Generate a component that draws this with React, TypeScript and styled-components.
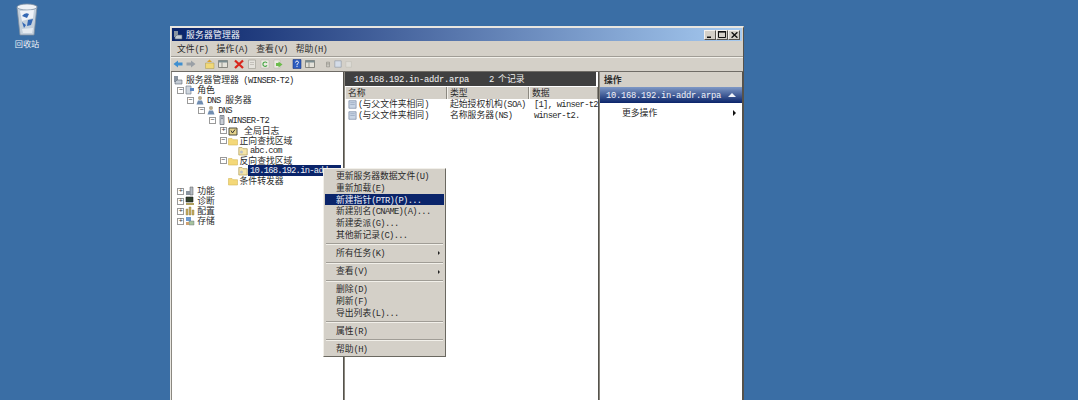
import React from "react"
import styled, { createGlobalStyle } from "styled-components"

const GlobalStyle = createGlobalStyle`
    html, body { margin: 0; padding: 0; height: 100%; overflow: hidden; }
    body {
        background: #3a6ea5;
        font-family: "Noto Sans CJK SC", "Liberation Mono", monospace;
        font-size: 8.8px;
        line-height: 10px;
        color: #2a2a2a;
    }
`

// latin letters sit in a narrower mono font than the chinese ones
const Latin = styled.span<{ $wide?: boolean }>`
    font-family: "Liberation Mono", monospace;
    font-size: 1em;
    letter-spacing: ${p => (p.$wide ? "-0.28px" : "-0.72px")};
`

const T = ({ s, wide }: { s: string; wide?: boolean }) => (
    <>
        {s.split(/([\u0000-\u00ff]+)/).map((part, i) =>
            i % 2 ? <Latin key={i} $wide={wide}>{part}</Latin> : part
        )}
    </>
)

const Desktop = styled.div`
    position: relative;
    height: 100vh;
    padding: 26px 0 0 170px;
    box-sizing: border-box;
    overflow: hidden;
`
const BinIcon = styled.div`
    position: absolute;
    left: 8px;
    top: 2px;
    width: 38px;
    display: flex;
    flex-direction: column;
    align-items: center;
    gap: 2px;
    color: #eef3f8;
    font-size: 8.2px;
`
const Window = styled.div`
    width: 574px;
    height: 400px;
    box-sizing: border-box;
    background: #d4d0c8;
    border-top: 2px solid #e8e6e0;
    border-left: 1px solid #e8e6e0;
    border-right: 1px solid #55524c;
    display: flex;
    flex-direction: column;
`
const TitleBar = styled.div`
    height: 13px;
    margin: 0 1px;
    display: flex;
    align-items: center;
    gap: 3px;
    padding-left: 1px;
    background: linear-gradient(90deg, #0a246a, #a6caf0);
    color: #f4f6fa;
    letter-spacing: 0.2px;
    flex: none;
`
const TitleButtons = styled.div`
    margin-left: auto;
    margin-right: 2px;
    display: flex;
`
const TitleButton = styled.div`
    width: 12px;
    height: 10px;
    box-sizing: border-box;
    background: #d4d0c8;
    border: 1px solid;
    border-color: #f4f2ee #55524c #55524c #f4f2ee;
    display: flex;
    align-items: center;
    justify-content: center;
`
const MenuBar = styled.div`
    height: 14px;
    margin-top: 1px;
    padding-left: 6px;
    display: flex;
    align-items: center;
    gap: 10px;
    flex: none;
    border-bottom: 1px solid #a09d96;
    box-shadow: 0 1px 0 #f2f0ea;
    & > span { width: 29.6px; white-space: nowrap; }
`
const Toolbar = styled.div`
    height: 14px;
    padding-left: 2px;
    display: flex;
    align-items: center;
    gap: 3px;
    flex: none;
`
const ToolGap = styled.div<{ $w: number }>`
    width: ${p => p.$w}px;
    height: 11px;
    flex: none;
`
const Panes = styled.div`
    flex: 1;
    display: grid;
    grid-template-columns: 173px 255px 144px;
    min-height: 0;
    border-top: 1px solid #6f6c66;
`
const Pane = styled.div`
    background: #fff;
    border-right: 1px solid #55524c;
    border-left: 1px solid #8b8880;
    min-width: 0;
    overflow: hidden;
`
const Tree = styled.div`
    padding-top: 3px;
`
const TreeRow = styled.div<{ $depth: number }>`
    height: 10.1px;
    padding-left: ${p => 1 + p.$depth * 10.7}px;
    display: flex;
    align-items: center;
    white-space: nowrap;
`
const Expander = styled.div`
    width: 7px;
    height: 7px;
    margin-right: 1px;
    box-sizing: border-box;
    flex: none;
    border: 1px solid #9a9a9a;
    color: #333;
    font: 7px/5px "Liberation Mono", monospace;
    text-align: center;
`
const ExpanderSpace = styled.div`
    width: 8px;
    flex: none;
`
const Label = styled.span<{ $selected?: boolean; $gap?: number }>`
    margin-left: ${p => p.$gap ?? 1}px;
    padding-left: ${p => (p.$selected ? 2 : 1)}px;
    background: ${p => (p.$selected ? "#0a246a" : "transparent")};
    color: ${p => (p.$selected ? "#f0f2f8" : "inherit")};
    width: ${p => (p.$selected ? "91px" : "auto")};
    overflow: ${p => (p.$selected ? "hidden" : "visible")};
`
const DarkHeader = styled.div`
    height: 14px;
    background: #404040;
    color: #f2f2f2;
    display: flex;
    align-items: center;
    gap: 20px;
    padding-left: 9px;
    margin-right: 2px;
    white-space: nowrap;
`
const ColumnRow = styled.div`
    display: grid;
    grid-template-columns: 102px 82px 1fr;
    height: 12px;
    margin-top: 1px;
    background: #d4d0c8;
`
const ColumnHead = styled.div`
    padding-left: 2px;
    line-height: 12px;
    border-right: 1px solid #8b8880;
    border-left: 1px solid #f2f0ea;
`
const Rows = styled.div`
    padding-top: 0;
`
const ListRow = styled.div`
    display: grid;
    grid-template-columns: 102px 84px 1fr;
    height: 11px;
    align-items: center;
    white-space: nowrap;
    padding-left: 3px;
`
const ListCell = styled.div`
    display: flex;
    align-items: center;
    gap: 1px;
`
const ActionTitle = styled.div`
    height: 15px;
    background: #d4d0c8;
    font-weight: 700;
    line-height: 15px;
    padding-left: 4px;
`
const ActionBand = styled.div`
    height: 16px;
    background: linear-gradient(180deg, #7e98c6, #0a246a);
    color: #f2f4fa;
    display: flex;
    align-items: center;
    justify-content: space-between;
    padding: 0 6px 0 6px;
`
const ActionItem = styled.div`
    height: 20px;
    display: flex;
    align-items: center;
    justify-content: space-between;
    padding: 0 6px 0 22px;
`
const Arrow = styled.div<{ $size: number; $color: string }>`
    width: 0;
    height: 0;
    border-left: ${p => p.$size}px solid ${p => p.$color};
    border-top: ${p => p.$size}px solid transparent;
    border-bottom: ${p => p.$size}px solid transparent;
`
const UpCaret = styled.div`
    width: 0;
    height: 0;
    border-left: 4px solid transparent;
    border-right: 4px solid transparent;
    border-bottom: 4px solid #f2f4fa;
`
const ContextMenu = styled.div`
    position: absolute;
    left: 323px;
    top: 168px;
    width: 123px;
    box-sizing: border-box;
    background: #d4d0c8;
    border: 1px solid;
    border-color: #f2f0ea #6a6860 #6a6860 #f2f0ea;
    padding: 1px;
`
const MenuItem = styled.div<{ $active?: boolean }>`
    height: 11.8px;
    box-sizing: border-box;
    display: flex;
    align-items: center;
    justify-content: space-between;
    padding: 1px 4px 0 11px;
    white-space: nowrap;
    background: ${p => (p.$active ? "#0a246a" : "transparent")};
    color: ${p => (p.$active ? "#eef1f8" : "inherit")};
`
const MenuSep = styled.div`
    height: 1px;
    margin: 2.7px 1px 2.6px;
    background: #a09d96;
    box-shadow: 0 1px 0 #f2f0ea;
`

const Svg = ({ w = 10, h = 10, children }: { w?: number; h?: number; children: React.ReactNode }) => (
    <svg width={w} height={h} viewBox="0 0 10 10" style={{ flex: "none", display: "block" }}>
        {children}
    </svg>
)

type IconKind =
    | "server" | "roles" | "person" | "tower" | "log" | "folder" | "zone"
    | "feature" | "diag" | "config" | "store"

const TreeIcon = ({ kind }: { kind: IconKind }) => {
    switch (kind) {
        case "server":
            return <Svg><path d="M1 1h4v6H1z" fill="#8a94a0" /><path d="M4 5h5v4H2V7z" fill="#c3cbd4" stroke="#5b6470" strokeWidth=".6" /></Svg>
        case "roles":
            return <Svg><path d="M1 1h5v8H1z" fill="#cfd6de" stroke="#6a7480" strokeWidth=".6" /><path d="M5 3h4v3H5z" fill="#5d86c2" /></Svg>
        case "person":
            return <Svg><circle cx="5" cy="3" r="2" fill="#b8a888" /><path d="M1.5 9.5 3 5.5h4l1.5 4z" fill="#6f8cb0" /></Svg>
        case "tower":
            return <Svg><path d="M3 .5h4v9H3z" fill="#c9ced6" stroke="#5b6470" strokeWidth=".7" /><path d="M4 2h2M4 3.5h2" stroke="#5b6470" strokeWidth=".6" /></Svg>
        case "log":
            return <Svg><path d="M1 2h8v7H1z" fill="#e6d48c" stroke="#3c3c30" strokeWidth=".9" /><path d="M3 4.5 4.5 7 7 3.5" stroke="#333" strokeWidth="1" fill="none" /></Svg>
        case "folder":
            return <Svg><path d="M.5 2.5h3.5l1 1.2h4.5v5.3H.5z" fill="#f4d878" stroke="#d4b85c" strokeWidth=".6" /></Svg>
        case "zone":
            return <Svg><path d="M.8 1.5h3.2l1 1.2h4.2v6.3H.8z" fill="#f4e4a8" stroke="#b8a468" strokeWidth=".8" /><circle cx="3.5" cy="6" r="1.5" fill="#b8c0c8" /></Svg>
        case "feature":
            return <Svg><path d="M5 1h3v8H5z" fill="#b4bac2" stroke="#555" strokeWidth=".5" /><path d="M1 5h4v4H1z" fill="#8a94a0" /></Svg>
        case "diag":
            return <Svg><path d="M1 1h7v5H1z" fill="#30402c" stroke="#222" strokeWidth=".6" /><path d="M1 7h8v2H1z" fill="#b0a060" /></Svg>
        case "config":
            return <Svg><path d="M1 3h2v6H1zM4 1h2v8H4zM7 4h2v5H7z" fill="#c8ac60" stroke="#8a7840" strokeWidth=".4" /></Svg>
        default:
            return <Svg><path d="M1 1h5v4H1z" fill="#6d9ad0" /><path d="M4 5h5v4H4z" fill="#a8c4a0" stroke="#5b6470" strokeWidth=".4" /><path d="M1 6h3v3H1z" fill="#d0a070" /></Svg>
    }
}

const treeRows: { depth: number; exp?: string; icon: IconKind; text: string; gap?: number; selected?: boolean }[] = [
    { depth: 0, icon: "server", text: "服务器管理器 (WINSER-T2)", gap: 2 },
    { depth: 0.4, exp: "−", icon: "roles", text: "角色" },
    { depth: 1.3, exp: "−", icon: "person", text: "DNS 服务器" },
    { depth: 2.35, exp: "−", icon: "person", text: "DNS" },
    { depth: 3.36, exp: "−", icon: "tower", text: "WINSER-T2", gap: 0 },
    { depth: 4.4, exp: "+", icon: "log", text: "全局日志", gap: 5 },
    { depth: 4.35, exp: "−", icon: "folder", text: "正向查找区域" },
    { depth: 5.33, icon: "zone", text: "abc.com" },
    { depth: 4.35, exp: "−", icon: "folder", text: "反向查找区域" },
    { depth: 5.33, icon: "zone", text: "10.168.192.in-addr.arpa", gap: 0, selected: true },
    { depth: 4.35, icon: "folder", text: "条件转发器" },
    { depth: 0.4, exp: "+", icon: "feature", text: "功能" },
    { depth: 0.4, exp: "+", icon: "diag", text: "诊断" },
    { depth: 0.4, exp: "+", icon: "config", text: "配置" },
    { depth: 0.4, exp: "+", icon: "store", text: "存储" },
]

const DocIcon = () => (
    <Svg w={9} h={9}>
        <path d="M1 .8h8v8.4H1z" fill="#c8d4e4" stroke="#7c8ca4" strokeWidth=".8" />
        <path d="M2.5 3h5M2.5 5h5" stroke="#8ea0b8" strokeWidth=".7" />
    </Svg>
)

const tools: (string | number)[] = [
    "back", "forward", 3, "up", "pane", 0, "delete", "doc", "refresh", "export", 3, "help", "pane", 4, "tall", "doc2", "fade",
]

const ToolIcon = ({ kind }: { kind: string }) => {
    switch (kind) {
        case "back":
            return <Svg><path d="M5 1.5v2h4.5v3H5v2L.5 5z" fill="#3f8fd0" /></Svg>
        case "forward":
            return <Svg><path d="M5 1.5v2H.5v3H5v2L9.5 5z" fill="#9aa0a6" /></Svg>
        case "up":
            return <Svg><path d="M.5 4h8.5v5.5H.5z" fill="#f0d878" stroke="#a89850" strokeWidth=".5" /><path d="M4.5.5 7 3H2z" fill="#d8a030" /></Svg>
        case "pane":
            return <Svg><path d="M.5 1.5h9v7h-9z" fill="#e4e2da" stroke="#74746c" strokeWidth=".8" /><path d="M.5 1.5h9v2h-9z" fill="#7a8c90" /><path d="M4 3.5v5" stroke="#74746c" strokeWidth=".7" /></Svg>
        case "delete":
            return <Svg><path d="M1 1.5 9 9M9 1.5 1 9" stroke="#d8261c" strokeWidth="2.3" /></Svg>
        case "doc":
            return <Svg><path d="M1.5 1h7v8.5h-7z" fill="#e4e2dc" stroke="#a4a29a" strokeWidth=".7" /><path d="M3 3.5h4M3 5.5h4" stroke="#b4b2aa" strokeWidth=".7" /></Svg>
        case "refresh":
            return <Svg><path d="M1 1h8v8H1z" fill="#eceae2" stroke="#b4b2aa" strokeWidth=".5" /><path d="M7 4a2.2 2.2 0 1 0 0 2.4" fill="none" stroke="#4aa84a" strokeWidth="1.2" /></Svg>
        case "export":
            return <Svg><path d="M1 1h6v8H1z" fill="#eceae2" stroke="#b4b2aa" strokeWidth=".5" /><path d="M5.5 2.5 9.5 5.5 5.5 8.5V7H3V4h2.5z" fill="#6cbc4c" /></Svg>
        case "help":
            return <Svg><path d="M1 .5h8v9H1z" fill="#2c5cc0" stroke="#1c3880" strokeWidth=".6" /><path d="M3.5 3.5Q3.8 2 5 2t1.5 1.4Q6.5 4.4 5 5.3v1" fill="none" stroke="#f4f4f4" strokeWidth="1" /><path d="M4.5 7h1v1h-1z" fill="#f4f4f4" /></Svg>
        case "tall":
            return <Svg w={6} h={11}><path d="M2.5 1h5v8h-5z" fill="#c8c6be" stroke="#76746c" strokeWidth=".7" /><path d="M2.5 4h5" stroke="#76746c" strokeWidth=".7" /></Svg>
        case "doc2":
            return <Svg w={8} h={10}><path d="M1 1h8v8H1z" fill="#d4dce8" stroke="#84909c" strokeWidth=".7" /></Svg>
        default:
            return <Svg w={8} h={10}><path d="M1 2h7v7H1z" fill="#dedcd6" stroke="#c0beb6" strokeWidth=".7" /></Svg>
    }
}

const menuGroups: { label: string; sub?: boolean; active?: boolean }[][] = [
    [
        { label: "更新服务器数据文件(U)" },
        { label: "重新加载(E)" },
        { label: "新建指针(PTR)(P)...", active: true },
        { label: "新建别名(CNAME)(A)..." },
        { label: "新建委派(G)..." },
        { label: "其他新记录(C)..." },
    ],
    [{ label: "所有任务(K)", sub: true }],
    [{ label: "查看(V)", sub: true }],
    [{ label: "删除(D)" }, { label: "刷新(F)" }, { label: "导出列表(L)..." }],
    [{ label: "属性(R)" }],
    [{ label: "帮助(H)" }],
]

export default function App() {
    return (
        <Desktop>
            <GlobalStyle />
            <BinIcon>
                <svg width="26" height="34" viewBox="0 0 26 34">
                    <path d="M3 5 23 4 20 33H6z" fill="#c4d0dc" stroke="#7e8ea0" strokeWidth=".8" />
                    <ellipse cx="13" cy="5" rx="10" ry="3" fill="#eef2f6" stroke="#8494a6" strokeWidth=".8" />
                    <path d="M6 9l14-1-1 8-11 3z" fill="#eef2f8" />
                    <path d="M8 14q3-4 7-2l-2 4zM14 18l5-1-2 6-4 1zM8 20l4 3-2 3z" fill="#3468b4" />
                    <path d="M8 27l11-1-1 5H9z" fill="#e4eaf0" />
                </svg>
                <span><T s="回收站" /></span>
            </BinIcon>

            <Window>
                <TitleBar>
                    <TreeIcon kind="server" />
                    <span>服务器管理器</span>
                    <TitleButtons>
                        <TitleButton>
                            <svg width="6" height="6" viewBox="0 0 6 6"><path d="M0 4.5h4v1.5H0z" fill="#111" /></svg>
                        </TitleButton>
                        <TitleButton>
                            <svg width="8" height="7" viewBox="0 0 8 7"><path d="M.5.5h7v6h-7z" fill="none" stroke="#111" /><path d="M0 0h8v1.6H0z" fill="#111" /></svg>
                        </TitleButton>
                        <TitleButton>
                            <svg width="7" height="6" viewBox="0 0 7 6"><path d="M.6.3 6.4 5.7M6.4.3.6 5.7" stroke="#111" strokeWidth="1.4" /></svg>
                        </TitleButton>
                    </TitleButtons>
                </TitleBar>

                <MenuBar>
                    <span><T s="文件(F)" /></span>
                    <span><T s="操作(A)" /></span>
                    <span><T s="查看(V)" /></span>
                    <span><T s="帮助(H)" /></span>
                </MenuBar>

                <Toolbar>
                    {tools.map((t, i) =>
                        typeof t === "number"
                            ? <ToolGap key={i} $w={t} />
                            : <ToolIcon key={i} kind={t} />
                    )}
                </Toolbar>

                <Panes>
                    <Pane>
                        <Tree>
                            {treeRows.map(r => (
                                <TreeRow key={r.text} $depth={r.depth}>
                                    {r.depth === 0
                                        ? null
                                        : r.exp ? <Expander>{r.exp}</Expander> : <ExpanderSpace />}
                                    <TreeIcon kind={r.icon} />
                                    <Label $gap={r.gap} $selected={r.selected}>
                                        <T s={r.text} />
                                    </Label>
                                </TreeRow>
                            ))}
                        </Tree>
                    </Pane>

                    <Pane>
                        <DarkHeader>
                            <span><T s="10.168.192.in-addr.arpa" wide /></span>
                            <span><T s="2 个记录" /></span>
                        </DarkHeader>
                        <ColumnRow>
                            <ColumnHead>名称</ColumnHead>
                            <ColumnHead>类型</ColumnHead>
                            <ColumnHead>数据</ColumnHead>
                        </ColumnRow>
                        <Rows>
                            <ListRow>
                                <ListCell><DocIcon /><span><T s="(与父文件夹相同)" /></span></ListCell>
                                <ListCell><span><T s="起始授权机构(SOA)" /></span></ListCell>
                                <ListCell><span><T s="[1], winser-t2" /></span></ListCell>
                            </ListRow>
                            <ListRow>
                                <ListCell><DocIcon /><span><T s="(与父文件夹相同)" /></span></ListCell>
                                <ListCell><span><T s="名称服务器(NS)" /></span></ListCell>
                                <ListCell><span><T s="winser-t2." /></span></ListCell>
                            </ListRow>
                        </Rows>
                    </Pane>

                    <Pane>
                        <ActionTitle>操作</ActionTitle>
                        <ActionBand>
                            <span><T s="10.168.192.in-addr.arpa" wide /></span>
                            <UpCaret />
                        </ActionBand>
                        <ActionItem>
                            <span>更多操作</span>
                            <Arrow $size={3.5} $color="#111" />
                        </ActionItem>
                    </Pane>
                </Panes>
            </Window>

            <ContextMenu>
                {menuGroups.map((group, g) => (
                    <React.Fragment key={g}>
                        {g > 0 && <MenuSep />}
                        {group.map(item => (
                            <MenuItem key={item.label} $active={item.active}>
                                <span><T s={item.label} /></span>
                                {item.sub && <Arrow $size={2.5} $color="#222" />}
                            </MenuItem>
                        ))}
                    </React.Fragment>
                ))}
            </ContextMenu>
        </Desktop>
    )
}
